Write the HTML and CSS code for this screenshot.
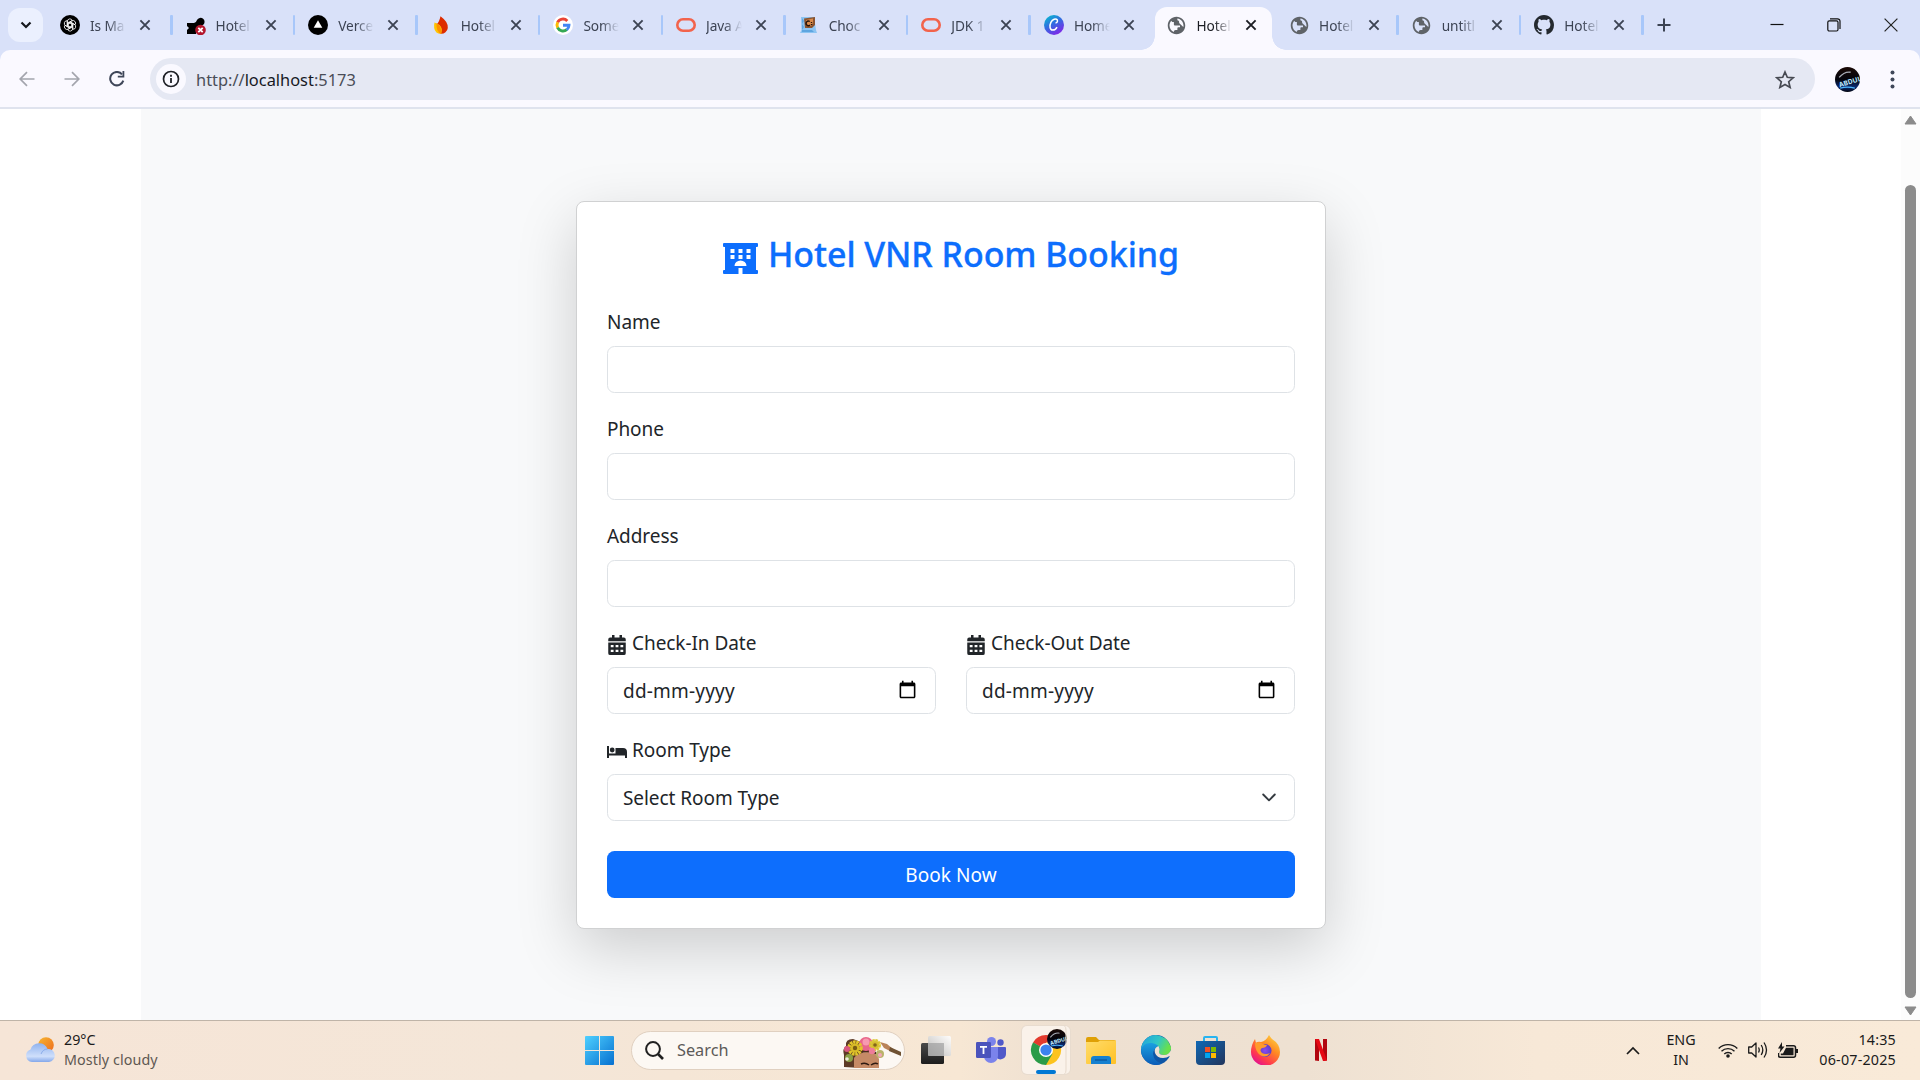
FILE: index.html
```html
<!DOCTYPE html>
<html lang="en">
<head>
<meta charset="utf-8">
<title>Hotel VNR Room Booking</title>
<link rel="stylesheet" href="styles.css">
</head>
<body>
<svg class="defs" aria-hidden="true">
  <defs>
    <linearGradient id="gCanva" x1="0" y1="0" x2=".6" y2="1"><stop offset="0" stop-color="#00c9cc"/><stop offset=".5" stop-color="#2f6fe0"/><stop offset="1" stop-color="#7d2ae8"/></linearGradient>
    <linearGradient id="gWin" x1="0" y1="0" x2="1" y2="1"><stop offset="0" stop-color="#4fd0ff"/><stop offset="1" stop-color="#0670d0"/></linearGradient>
    <linearGradient id="gFolder" x1="0" y1="0" x2="1" y2="1"><stop offset="0" stop-color="#ffdc6b"/><stop offset="1" stop-color="#ffc125"/></linearGradient>
    <linearGradient id="gEdge" x1="0" y1="0" x2="1" y2=".4"><stop offset="0" stop-color="#1e9fe0"/><stop offset=".6" stop-color="#31c7c5"/><stop offset="1" stop-color="#68e04c"/></linearGradient>
    <linearGradient id="gEdge2" x1="0" y1="0" x2="0" y2="1"><stop offset="0" stop-color="#1ba0e0"/><stop offset="1" stop-color="#0a5cb8"/></linearGradient>
    <linearGradient id="gStore" x1="0" y1="0" x2="1" y2="1"><stop offset="0" stop-color="#1068b4"/><stop offset="1" stop-color="#22355c"/></linearGradient>
    <linearGradient id="gFox" x1="1" y1="0" x2=".3" y2="1"><stop offset="0" stop-color="#ffe54a"/><stop offset=".45" stop-color="#ff8a22"/><stop offset=".8" stop-color="#ff3750"/><stop offset="1" stop-color="#e3138f"/></linearGradient>
    <radialGradient id="gFox2"><stop offset="0" stop-color="#8a4bf0"/><stop offset="1" stop-color="#5b3dc8"/></radialGradient>
    <linearGradient id="gCloud" x1="0" y1="0" x2="0" y2="1"><stop offset="0" stop-color="#8fb2ee"/><stop offset=".7" stop-color="#cfdffb"/><stop offset="1" stop-color="#83a7ea"/></linearGradient>
    <linearGradient id="gSun" x1="0" y1="0" x2="1" y2="1"><stop offset="0" stop-color="#f6b62f"/><stop offset="1" stop-color="#ee6a1e"/></linearGradient>
    <linearGradient id="gDark" x1="0" y1="0" x2="0" y2="1"><stop offset="0" stop-color="#4a4a4a"/><stop offset="1" stop-color="#1c1c1c"/></linearGradient>
    <linearGradient id="gPale" x1="1" y1="0" x2="0" y2="1"><stop offset="0" stop-color="#ffffff"/><stop offset="1" stop-color="#b8b8b8"/></linearGradient>
    <linearGradient id="gNight" x1="0" y1="0" x2="0" y2="1"><stop offset="0" stop-color="#1a0a06"/><stop offset=".5" stop-color="#03040c"/><stop offset=".8" stop-color="#0a2a72"/><stop offset="1" stop-color="#02030a"/></linearGradient>
    <symbol id="x" viewBox="0 0 12 12"><path d="M1.4 1.4l9.2 9.2M10.6 1.4l-9.2 9.2" fill="none" stroke="currentColor" stroke-width="1.9"/></symbol>
    <symbol id="globe" viewBox="0 0 24 24"><path fill="#5f6368" d="M12 2C6.48 2 2 6.48 2 12s4.48 10 10 10 10-4.48 10-10S17.52 2 12 2zM4 12c0-.61.08-1.21.21-1.78L8.99 15v1c0 1.1.9 2 2 2v1.93C7.06 19.43 4 16.07 4 12zm13.89 5.4c-.26-.81-1-1.4-1.9-1.4h-1v-3c0-.55-.45-1-1-1h-6v-2h2c.55 0 1-.45 1-1V7h2c1.1 0 2-.9 2-2v-.41C17.920 5.770 20 8.650 20 12c0 2.080-.81 3.980-2.110 5.400z" transform="rotate(180 12 12)"/></symbol>
    <symbol id="oracle" viewBox="0 0 20 20"><rect x="1.300" y="4.300" width="17.400" height="11.400" rx="5.700" fill="none" stroke="#f2634c" stroke-width="2.600"/></symbol>
    <symbol id="avatar" viewBox="0 0 24 24"><circle cx="12" cy="12" r="12" fill="url(#gNight)"/><path d="M4 10Q9 4 15 5" stroke="#a9aeb8" stroke-width="1.300" fill="none"/><text x="3" y="17" class="avatar-text" transform="rotate(-17 12 13)">ABDUL</text><path d="M5 20.300Q12 18.500 19 20.300" stroke="#4db8ff" stroke-width="1.200" fill="none"/></symbol>
    <symbol id="cal" viewBox="0 0 448 512"><path fill="currentColor" fill-rule="evenodd" d="M96 0h64v64h128V0h64v64h48a48 48 0 0 1 48 48v48H0v-48a48 48 0 0 1 48-48h48zM0 192h448v272a48 48 0 0 1-48 48H48a48 48 0 0 1-48-48zM64 256v56h72v-56zM188 256v56h72v-56zM312 256v56h72v-56zM64 376v56h72v-56zM188 376v56h72v-56zM312 376v56h72v-56z"/></symbol>
    <symbol id="datepick" viewBox="0 0 24 24"><path d="M20 3h-1V1h-2v2H7V1H5v2H4c-1.100 0-2 .9-2 2v16c0 1.100.9 2 2 2h16c1.100 0 2-.9 2-2V5c0-1.100-.9-2-2-2zm0 18H4V8h16v13z"/></symbol>
  </defs>
</svg>

<div class="tabstrip">
  <div class="tab-search"><svg width="12" height="8" viewBox="0 0 12 8"><path d="M1.500 1.500L6 6l4.500-4.500" fill="none" stroke="#16181d" stroke-width="2.200"/></svg></div>
  <div class="tabs">
    <div class="tab"><svg class="fav" viewBox="0 0 20 20"><circle cx="10" cy="10" r="10"/><g fill="none" stroke="#fff" stroke-width=".8"><path id="petal" d="M7.300 11.500V6.500a2.600 2.600 0 0 1 5-1l-4 2.400v4.700"/><use href="#petal" transform="rotate(60 10 10)"/><use href="#petal" transform="rotate(120 10 10)"/><use href="#petal" transform="rotate(180 10 10)"/><use href="#petal" transform="rotate(240 10 10)"/><use href="#petal" transform="rotate(300 10 10)"/></g></svg><span class="tab-title">Is Ma</span><svg class="close"><use href="#x"/></svg></div>
    <div class="tab"><svg class="fav" viewBox="0 0 20 20"><path d="M1 8h7q2 0 3-3a4 4 0 1 1 6 5q-7 1-7 5v4H1v-4l2-2-2-2z"/><circle cx="14.500" cy="15" r="5.300" fill="#b3162d"/><path d="M12.300 12.800l4.400 4.400m0-4.400l-4.400 4.400" stroke="#fff" stroke-width="1.800"/></svg><span class="tab-title">Hotel</span><svg class="close"><use href="#x"/></svg></div>
    <div class="tab"><svg class="fav" viewBox="0 0 20 20"><circle cx="10" cy="10" r="10"/><path d="M10 5.200l4.300 7.600H5.700z" fill="#fff"/></svg><span class="tab-title">Verce</span><svg class="close"><use href="#x"/></svg></div>
    <div class="tab"><svg class="fav" viewBox="0 0 20 20"><path d="M9.500 1.200Q17.500 7 16.800 13a6.500 6.500 0 0 1-7 5.800Q5 17 5 10q2-1.500 3-4 .8-2 1.500-4.800z" fill="#dd2c00"/><path d="M3.500 7.500Q3 9 3.200 13a6.300 6.300 0 0 0 7 5.800Q12 13 8.500 10 7 8.500 3.500 7.500z" fill="#ffc400"/><path d="M5.500 8.200Q11 11 10.200 18.800 5 17 5.500 8.200z" fill="#ff9100"/></svg><span class="tab-title">Hotel</span><svg class="close"><use href="#x"/></svg></div>
    <div class="tab"><svg class="fav" viewBox="0 0 20 20"><circle cx="10" cy="10" r="10" fill="#fff"/><g fill="none" stroke-width="2.900"><path d="M14.300 5.900A6 6 0 0 0 4.600 7.400" stroke="#ea4335"/><path d="M4.700 7.200a6 6 0 0 0 0 5.600" stroke="#fbbc05"/><path d="M4.600 12.600a6 6 0 0 0 9.200 2.100" stroke="#34a853"/><path d="M13.700 14.800A6 6 0 0 0 16 10.200h-6" stroke="#4285f4"/></g></svg><span class="tab-title">Some</span><svg class="close"><use href="#x"/></svg></div>
    <div class="tab"><svg class="fav"><use href="#oracle"/></svg><span class="tab-title">Java A</span><svg class="close"><use href="#x"/></svg></div>
    <div class="tab"><svg class="fav" viewBox="0 0 20 20"><path d="M2 2h13l2 13 1 3H1l1.500-3z" fill="#8cc4f2"/><path d="M3 3l2 3-2 3 2 3-2 3h10l2 2H3z" fill="#5ea5e0"/><path d="M5 3.500L16 2v8l-3 3H6z" fill="#8b5430"/><path d="M7 5l7-1.500V8l-2 3H8z" fill="#d98a4b"/><path d="M10.800 6.500A2.300 2.300 0 1 0 11 10m1.500-3v1m0 1v1" stroke="#25150c" stroke-width="1.400" fill="none"/></svg><span class="tab-title">Choc</span><svg class="close"><use href="#x"/></svg></div>
    <div class="tab"><svg class="fav"><use href="#oracle"/></svg><span class="tab-title">JDK 1</span><svg class="close"><use href="#x"/></svg></div>
    <div class="tab no-sep"><svg class="fav" viewBox="0 0 20 20"><circle cx="10" cy="10" r="10" fill="url(#gCanva)"/><path d="M11.500 7.800c1.500.3 2.500-1.700 1.700-3-1.300-1.700-4.700-.8-6.300 2.500-1.800 3.600-1 7.600 1.700 7.800 2.100.1 3.700-1.500 4.400-3" fill="none" stroke="#fff" stroke-width="1.500"/></svg><span class="tab-title">Home</span><svg class="close"><use href="#x"/></svg></div>
    <div class="tab active"><svg class="fav globe"><use href="#globe"/></svg><span class="tab-title">Hotel</span><svg class="close"><use href="#x"/></svg></div>
    <div class="tab"><svg class="fav globe"><use href="#globe"/></svg><span class="tab-title">Hotel</span><svg class="close"><use href="#x"/></svg></div>
    <div class="tab"><svg class="fav globe"><use href="#globe"/></svg><span class="tab-title">untitl</span><svg class="close"><use href="#x"/></svg></div>
    <div class="tab"><svg class="fav" viewBox="0 0 16 16"><path fill="#24292f" d="M8 0C3.580 0 0 3.580 0 8c0 3.540 2.290 6.530 5.470 7.590.4.070.55-.17.55-.38 0-.19-.01-.82-.01-1.490-2.010.37-2.530-.49-2.690-.94-.09-.23-.48-.94-.82-1.130-.28-.15-.68-.52-.01-.53.63-.01 1.080.58 1.230.82.72 1.210 1.870.87 2.330.66.070-.52.28-.87.51-1.070-1.780-.2-3.640-.89-3.640-3.950 0-.87.31-1.590.82-2.150-.08-.2-.36-1.020.08-2.120 0 0 .67-.21 2.200.82.640-.18 1.320-.27 2-.27s1.360.09 2 .27c1.530-1.040 2.200-.82 2.200-.82.44 1.100.16 1.920.08 2.120.51.56.82 1.270.82 2.150 0 3.070-1.870 3.750-3.650 3.950.29.25.54.73.54 1.480 0 1.070-.01 1.930-.01 2.200 0 .21.15.46.55.38A8.010 8.010 0 0 0 16 8c0-4.420-3.580-8-8-8z"/></svg><span class="tab-title">Hotel</span><svg class="close"><use href="#x"/></svg></div>
  </div>
  <svg class="newtab" width="14" height="14" viewBox="0 0 14 14"><path d="M7 .5v13M.5 7h13" stroke="#3c4353" stroke-width="2"/></svg>
  <div class="window-buttons">
    <svg width="14" height="14" viewBox="0 0 14 14"><path d="M.5 6.500h13" stroke="#111" stroke-width="1.200"/></svg>
    <svg width="14" height="14" viewBox="0 0 14 14"><rect x=".8" y="2.800" width="10.200" height="10.200" rx="1.500" fill="none" stroke="#111" stroke-width="1.200"/><path d="M3 .8h7.500a2.500 2.500 0 0 1 2.500 2.500V11" fill="none" stroke="#111" stroke-width="1.200"/></svg>
    <svg width="14" height="14" viewBox="0 0 14 14"><path d="M.6.6l12.800 12.800M13.400.6L.6 13.400" stroke="#222" stroke-width="1.200"/></svg>
  </div>
</div>

<div class="toolbar">
  <svg class="nav-icon" viewBox="0 0 16 16"><path d="M15.500 8H1.500M8 1.200L1.200 8 8 14.800" fill="none" stroke="#a3a5ad" stroke-width="1.700"/></svg>
  <svg class="nav-icon" viewBox="0 0 16 16"><path d="M.5 8h14M8 1.200L14.800 8 8 14.800" fill="none" stroke="#a3a5ad" stroke-width="1.700"/></svg>
  <svg class="nav-icon" viewBox="0 0 16 16"><path d="M14.300 9.600A6.700 6.700 0 1 1 13 3.300" fill="none" stroke="#3f4759" stroke-width="2"/><path d="M15.300 0v6.500H8.800V4.800h4.700V0z" fill="#3f4759"/></svg>
  <div class="omnibox">
    <span class="site-info"><svg width="18" height="18" viewBox="0 0 18 18"><circle cx="9" cy="9" r="7.500" fill="none" stroke="#1f2127" stroke-width="1.700"/><path d="M9 8v5M9 4.700v2" stroke="#1f2127" stroke-width="1.800"/></svg></span>
    <span class="url">http://<b>localhost</b>:5173</span>
    <svg class="star" viewBox="0 0 20 19"><path d="M10 2l2.300 5.300 5.900.5-4.500 3.900 1.400 5.700-5.100-3-5.100 3 1.400-5.700-4.500-3.900 5.900-.5z" fill="none" stroke="#474a52" stroke-width="1.700"/></svg>
  </div>
  <svg class="profile"><use href="#avatar"/></svg>
  <svg class="menu" width="5" height="19" viewBox="0 0 5 19"><g fill="#3f4759"><circle cx="2.500" cy="2.500" r="2"/><circle cx="2.500" cy="9.500" r="2"/><circle cx="2.500" cy="16.500" r="2"/></g></svg>
</div>

<div class="viewport">
  <main class="page">
    <form class="card">
      <h2><svg width="35" height="31" viewBox="0 0 35 31"><path fill="#0d6efd" fill-rule="evenodd" d="M1 0h33q1 0 1 1v2q0 1-1 1h-1v23h1q1 0 1 1v2q0 1-1 1H19.500v-6h-4v6H1q-1 0-1-1v-2q0-1 1-1h1V4H1Q0 4 0 3V1q0-1 1-1zM7.500 6v4h4V6zM15.500 6v4h4V6zM23.500 6v4h4V6zM7.500 12v4h4v-4zM15.500 12v4h4v-4zM23.500 12v4h4v-4zM11.500 23h12a6 5.500 0 0 0-12 0z"/></svg><span>Hotel VNR Room Booking</span></h2>
      <div class="field"><label>Name</label><div class="input"></div></div>
      <div class="field"><label>Phone</label><div class="input"></div></div>
      <div class="field"><label>Address</label><div class="input"></div></div>
      <div class="row">
        <div class="field"><label><svg class="cal"><use href="#cal"/></svg>Check-In Date</label><div class="input date"><span>dd-mm-yyyy</span><svg class="picker"><use href="#datepick"/></svg></div></div>
        <div class="field"><label><svg class="cal"><use href="#cal"/></svg>Check-Out Date</label><div class="input date"><span>dd-mm-yyyy</span><svg class="picker"><use href="#datepick"/></svg></div></div>
      </div>
      <div class="field"><label><svg class="bed" viewBox="0 0 20 12"><path d="M0 0h2v7.500h6.500V2H16q4 0 4 4v6h-2V9.500H2V12H0z"/><circle cx="5.200" cy="4" r="2.400"/></svg>Room Type</label><div class="input select"><span>Select Room Type</span><svg width="14" height="9" viewBox="0 0 14 9"><path d="M1.200 1.500L7 7.300l5.800-5.800" fill="none" stroke="#343a40" stroke-width="1.900" stroke-linecap="round" stroke-linejoin="round"/></svg></div></div>
      <button class="submit" type="button">Book Now</button>
    </form>
  </main>
  <div class="scrollbar">
    <svg width="13" height="10" viewBox="0 0 13 10"><path d="M6.500 1L12 9H1z" fill="#8b8b8b" stroke="#8b8b8b" stroke-linejoin="round"/></svg>
    <div class="thumb"></div>
    <svg width="13" height="10" viewBox="0 0 13 10"><path d="M6.500 9L12 1H1z" fill="#8b8b8b" stroke="#8b8b8b" stroke-linejoin="round"/></svg>
  </div>
</div>

<footer class="taskbar">
  <div class="weather">
    <svg width="30" height="26" viewBox="0 0 30 26"><circle cx="21" cy="8" r="7.800" fill="url(#gSun)"/><path d="M7 25a6.500 6.500 0 0 1-1.500-12.600A9 9 0 0 1 22.500 12 6.500 6.500 0 1 1 24 25z" fill="url(#gCloud)"/><path d="M16 17q2-5 6.500-5" stroke="#7ea2e6" fill="none" stroke-width=".8"/></svg>
    <div class="weather-text"><span>29°C</span><span class="dim">Mostly cloudy</span></div>
  </div>
  <div class="apps">
    <svg class="start" width="29" height="29" viewBox="0 0 29 29"><path d="M1 0h13v14H0V1q0-1 1-1zM15 0h13q1 0 1 1v13H15zM0 15h14v14H1q-1 0-1-1zM15 15h14v13q0 1-1 1H15z" fill="url(#gWin)"/></svg>
    <div class="search">
      <svg width="19" height="19" viewBox="0 0 19 19"><circle cx="8" cy="8" r="6.900" fill="none" stroke="#202020" stroke-width="2"/><path d="M13 13l5 5" stroke="#202020" stroke-width="2.600"/></svg>
      <span>Search</span>
      <svg class="frida" width="60" height="31" viewBox="0 0 60 31"><path d="M2 30V18Q0 12 4 9 3 2 11 2l8 3v26z" fill="#5d3a26"/><path d="M12 31V21q3-6 13-6 10 0 12 7v9z" fill="#c58a66"/><path d="M12 20q12-9 25-1-6-9-14-9-9 0-11 10z" fill="#4a2c1d"/><path d="M19 27q4-2 8 1m2 0q4-3 7-1" stroke="#2e1a12" fill="none" stroke-width="1.500"/><path d="M38 5l7 2 6 5-3 2-6-3z" fill="#b98258"/><path d="M48 10l11 5v4l-12-5z" fill="#6f5233"/><circle cx="7" cy="21" r="4" fill="#8aa146"/><circle cx="38" cy="17" r="4" fill="#b9b36a"/><circle cx="24" cy="7" r="7" fill="#e8668a"/><circle cx="24" cy="5" r="3.500" fill="#f79ab0"/><circle cx="13" cy="11" r="6" fill="none" stroke="#e2c62a" stroke-width="3.500" stroke-dasharray="2.600 .6"/><circle cx="13" cy="11" r="4.500" fill="#d9bb27"/><circle cx="13" cy="11" r="2.200" fill="#7a5c14"/><circle cx="33" cy="8" r="4.500" fill="#d2bd30" stroke="#dcc736" stroke-width="3" stroke-dasharray="2.400 .6"/><circle cx="33" cy="8" r="1.800" fill="#85651a"/><circle cx="5" cy="12" r="3" fill="#d9567e"/><circle cx="30" cy="14" r="3.200" fill="#ee7c99"/><circle cx="38" cy="18" r="2" fill="#f2a6b8"/><circle cx="5" cy="22" r="1.800" fill="#f0eadc"/></svg>
    </div>
    <svg class="taskview" width="30" height="28" viewBox="0 0 30 28"><rect y="7" width="23" height="21" rx="1.500" fill="url(#gDark)"/><rect x="7" width="23" height="20" rx="1.500" fill="url(#gPale)" opacity=".92"/><path d="M7 7h16v13H7z" fill="#9c9c9c" opacity=".6"/></svg>
    <svg class="teams" width="30" height="26" viewBox="0 0 30 26"><circle cx="15.500" cy="4.500" r="4.500" fill="#7b83eb"/><circle cx="24.500" cy="5.500" r="3.200" fill="#5059c9"/><path d="M20 10h9q1 0 1 1v6a5.500 5.500 0 0 1-10 3z" fill="#5059c9"/><path d="M8 10h14v9a7 7 0 0 1-14 0z" fill="#7b83eb"/><rect y="5" width="15" height="16" rx="1.200" fill="#4b53bc"/><path d="M4 9h7v1.800H8.400V17H6.600v-6.200H4z" fill="#fff"/></svg>
    <div class="chrome"><svg width="48" height="48" viewBox="0 0 48 48"><path d="M24 24L11 16.500A15 15 0 0 1 37 16.500H24z" fill="#e33b2e"/><path d="M24 24L11 16.500A15 15 0 0 0 24 39l6.500-11.300z" fill="#2a9b48"/><path d="M24 24L24 39A15 15 0 0 0 37 16.500H24z" fill="#fcc31e"/><path d="M24 24L11 16.500 17.500 27.800 24 24 30.500 27.800 24 39z" fill="#2a9b48"/><circle cx="24" cy="24" r="7" fill="#fff"/><circle cx="24" cy="24" r="5.600" fill="#3b82ee"/><use href="#avatar" x="25" y="3" width="20" height="20"/><rect x="14" y="44" width="20" height="4" rx="2" fill="#0078d4"/><path d="M42.500 0q1.500 1 1.500 4v40q0 3-1.500 4" fill="none" stroke="#e6d9cc"/></svg></div>
    <svg class="folder" width="30" height="27" viewBox="0 0 30 27"><path d="M0 2q0-2 2-2h8l3 3h15q2 0 2 2v4H0z" fill="#dfa006"/><path d="M0 5h12l2-1.500h16V26q0 1-1 1H1q-1 0-1-1z" fill="url(#gFolder)"/><path d="M5 27v-5q0-3 3-3h14q3 0 3 3v5z" fill="#1580d0"/><path d="M9 23h12" stroke="#0b559c" stroke-width="1.300"/></svg>
    <svg class="edge" width="30" height="30" viewBox="0 0 30 30"><circle cx="15" cy="15" r="15" fill="#0e56a6"/><path d="M0 15A15 15 0 0 1 15 0q11 1 15 12 .5 8-7 8-6 0-5-4 2-5-4-6Q5 8 0 15z" fill="url(#gEdge)"/><path d="M0 15Q2 7 11 8q6 1 7 5-6 0-6 6 1 8 9 9.700A15 15 0 0 1 0 15z" fill="url(#gEdge2)"/><path d="M17.500 11q-5 2-3.500 7 2 5 8 5 4 0 6.500-2l1.500 1v-7q-2 5-7 5-5 0-5-3 1.500-3-.5-6z" fill="#efe1d2"/></svg>
    <svg class="store" width="29" height="29" viewBox="0 0 29 29"><path d="M8 7V2q0-1 1-1h11q1 0 1 1v5" fill="none" stroke="#28b4f0" stroke-width="2"/><path d="M0 5h29v20q0 4-4 4H4q-4 0-4-4z" fill="url(#gStore)"/><path d="M9 11h5v5H9z" fill="#f25022"/><path d="M15 11h5v5h-5z" fill="#7fba00"/><path d="M9 17h5v5H9z" fill="#00a4ef"/><path d="M15 17h5v5h-5z" fill="#ffb900"/></svg>
    <svg class="firefox" width="29" height="30" viewBox="0 0 29 30"><path d="M18 0q2 3 3 4 8 5 8 13A14.300 13.500 0 0 1 0 17Q0 10 4 4l1 4q2-2 5-1 5-1 8-7z" fill="url(#gFox)"/><circle cx="14" cy="15.500" r="6.500" fill="url(#gFox2)"/><path d="M4 8q5-2 8 1 2 1 4 1-1 3-5 3-3 2 0 5 4 2 8 0-4 6-10 2-5-4-5-12z" fill="#ff9a2c"/></svg>
    <svg class="netflix" width="12" height="22" viewBox="0 0 12 22"><path d="M0 0h4v22l-4-.5zM8 0h4v21.500L8 22z" fill="#b1060f"/><path d="M0 0h4l8 21.500-4 .5z" fill="#e50914"/></svg>
  </div>
  <div class="tray">
    <svg class="up" width="14" height="9" viewBox="0 0 14 9"><path d="M1 8l6-6 6 6" fill="none" stroke="#1b1b1b" stroke-width="1.700"/></svg>
    <div class="lang"><span>ENG</span><span>IN</span></div>
    <svg class="wifi" width="20" height="16" viewBox="0 0 20 16"><g fill="none" stroke="#1b1b1b" stroke-width="1.400"><path d="M.7 6.500a13 13 0 0 1 18.600 0M3.500 9.300a9.200 9.200 0 0 1 13 0M6.300 12a5.200 5.200 0 0 1 7.400 0"/></g><circle cx="10" cy="14" r="1.800" fill="#1b1b1b"/></svg>
    <svg class="volume" width="20" height="18" viewBox="0 0 20 18"><g fill="none" stroke="#1b1b1b" stroke-width="1.300"><path d="M.7 6h3L8 2v14l-4.300-4h-3z" stroke-linejoin="round"/><path d="M10.500 6.500q1.500 2.500 0 5M13.200 4q3.200 5 0 10M16 1.500q5 7.500 0 15"/></g></svg>
    <svg class="battery" width="20" height="17" viewBox="0 0 20 17"><path d="M8 3.700h7.500q2 0 2 2v7.600q0 2-2 2h-13q-2 0-2-2V11" fill="none" stroke="#1b1b1b" stroke-width="1.500"/><path d="M8 5.800h7.500v7.400H2.800V11.500H5zM18 7h2v4h-2zM4 0L0 6.500h2.500L1.500 11l5-6.500H4z" fill="#1b1b1b"/></svg>
    <div class="clock"><span>14:35</span><span>06-07-2025</span></div>
  </div>
</footer>
</body>
</html>
```
FILE: styles.css
```css
* { box-sizing: border-box; }
body {
  margin: 0;
  width: 1920px;
  height: 1080px;
  overflow: hidden;
  display: flex;
  flex-direction: column;
  font-family: "Noto Sans", "Open Sans", sans-serif;
  color: #212529;
  background: #fff;
}
svg { display: block; flex: none; }
.defs { position: absolute; width: 0; height: 0; }
.avatar-text { font: bold 6.5px "Noto Sans", sans-serif; fill: #bfeaff; }

/* tab strip */
.tabstrip { flex: none; height: 50px; display: flex; align-items: center; background: #d9e1f9; z-index: 1; }
.tab-search { width: 35px; height: 34px; margin: 0 6px 0 8px; border-radius: 12px; background: #ebf0fe; display: flex; align-items: center; justify-content: center; }
.tabs { display: flex; height: 50px; }
.tab { position: relative; width: 122.62px; display: flex; align-items: center; padding-left: 14px; color: #3c4353; }
.tab:first-child { padding-left: 11px; }
.tab::after { content: ""; position: absolute; right: -1px; top: 14.5px; width: 2.5px; height: 20px; border-radius: 1px; background: #a8c7fa; }
.tab.no-sep::after { display: none; }
.fav { width: 20px; height: 20px; }
.fav.globe { width: 21px; height: 21px; margin: 0 -.5px; }
.tab-title { width: 36px; margin: 1px 0 0 10px; white-space: nowrap; font-size: 13.7px; line-height: 22px; letter-spacing: -.1px; -webkit-mask-image: linear-gradient(90deg, #000 50%, transparent); mask-image: linear-gradient(90deg, #000 50%, transparent); }
.close { width: 12px; height: 12px; margin-left: 13px; }
.tab.active { color: #1b1d23; z-index: 1; }
.tab.active > * { z-index: 1; }
.tab.active::before { content: ""; position: absolute; left: 3px; right: 3px; top: 7px; bottom: 0; border-radius: 12px 12px 0 0; background: #faf9ff; }
.tab.active::after { left: -11px; right: -11px; top: 36px; width: auto; height: 14px; border-radius: 0; background: radial-gradient(circle at 0 0, transparent 13.5px, #faf9ff 14px) left / 14px 14px no-repeat, radial-gradient(circle at 100% 0, transparent 13.5px, #faf9ff 14px) right / 14px 14px no-repeat; z-index: 0; }
.newtab { margin-left: 14px; }
.window-buttons { margin: 0 22px 0 auto; display: flex; gap: 43px; }

/* address bar */
.toolbar { flex: none; height: 59px; display: flex; align-items: center; padding: 1px 0 0 19px; background: #faf9ff; border-bottom: 2px solid #dfe3ee; box-shadow: 0 -14px 0 0 #d9e1f9; border-radius: 10px 10px 0 0; }
.nav-icon { width: 16px; height: 16px; margin-right: 29px; }
.omnibox { width: 1665px; height: 42px; border-radius: 21px; background: #e5e8f3; display: flex; align-items: center; padding: 0 20px 0 6px; margin-left: -4px; }
.site-info { width: 30px; height: 30px; border-radius: 50%; background: #faf9ff; display: flex; align-items: center; justify-content: center; }
.url { margin: 1px 0 0 10px; font-size: 16.4px; line-height: 24px; color: #4a4d57; }
.url b { font-weight: 400; color: #17191f; }
.star { width: 20px; height: 19px; margin-left: auto; }
.profile { width: 25px; height: 25px; margin-left: 20px; }
.menu { margin-left: 30px; }

/* page area */
.viewport { flex: 1; min-height: 0; display: flex; padding-left: 141px; }
.page { width: 1620px; background: #f8f9fa; display: flex; justify-content: center; align-items: flex-start; padding-top: 92px; overflow: hidden; }
.card { width: 750px; height: 728px; padding: 30px; border: 1px solid #d0d1d2; border-radius: 8px; background: #fff; box-shadow: 0 20px 60px rgba(0, 0, 0, .175); display: flex; flex-direction: column; }
h2 { margin: 0 0 30px; height: 44px; display: flex; align-items: center; justify-content: center; gap: 10px; font-size: 34px; font-weight: 500; line-height: 42px; letter-spacing: -.08px; color: #0d6efd; -webkit-text-stroke: .3px #0d6efd; white-space: nowrap; }
h2 svg { margin-top: 8px; }
h2 span { margin-top: -1px; }
.field { flex: 1; margin-bottom: 20px; }
.card > .field { flex: none; }
.row { display: flex; gap: 30px; }
label { display: flex; align-items: center; height: 30px; padding-top: 2px; margin-bottom: 10px; font-size: 19px; line-height: 28px; letter-spacing: -.06px; white-space: nowrap; }
.cal { width: 18px; height: 20px; margin: 3px 6px 0 1px; }
.bed { width: 20px; height: 12px; margin: 3px 5px 0 0; fill: #212529; }
.input { height: 47px; border: 1px solid #dee2e6; border-radius: 7.5px; background: #fff; display: flex; align-items: center; justify-content: space-between; padding: 0 18px 0 15px; font-size: 19px; letter-spacing: -.06px; }
.date { letter-spacing: .2px; }
.picker { width: 19px; height: 19px; margin-top: -2px; }
.select svg { margin-top: -1px; }
.submit { height: 47px; margin-top: 10px; border: 0; border-radius: 7.5px; background: #0d6efd; color: #fff; font: 19px "Noto Sans", sans-serif; letter-spacing: .05px; }
.scrollbar { margin-left: auto; width: 19px; background: #fcfcfc; display: flex; flex-direction: column; align-items: center; padding: 6px 0 4px 0; }
.thumb { width: 11px; height: 813px; margin: 60px 0 auto; border-radius: 6px; background: #8b8b8b; }

/* taskbar */
.taskbar { flex: none; height: 60px; border-top: 1px solid #bfb4a8; display: flex; background: linear-gradient(90deg, #f6e5d7 0, #f4e6d8 28%, #f5e6d6 35%, #f7e7d4 50%, #eee0d1 55%, #eee1d2 68%, #f7e8d7 80%, #f9ead8 100%); font-size: 14.3px; line-height: 20px; color: #1b1b1b; position: relative; z-index: 2; }
.weather { width: 585px; padding: 0 0 1px 25px; display: flex; align-items: center; gap: 9px; }
.weather-text, .lang, .clock { display: flex; flex-direction: column; }
.dim { color: #5e5852; letter-spacing: .1px; }
.apps { display: flex; align-items: center; padding-bottom: 1px; }
.search { width: 274px; height: 39px; margin-left: 17px; border: 1px solid #e0d0c0; border-radius: 20px; background: #fcf8f3; display: flex; align-items: center; padding-left: 13px; font-size: 16.3px; color: #5c5a58; }
.search span { margin-left: 13px; }
.frida { margin: 5px 2px 0 auto; }
.taskview { margin-left: 16px; }
.teams { margin-left: 25px; }
.chrome { width: 48px; height: 48px; margin-left: 16px; border-radius: 5px; background: #faf2ea; box-shadow: 0 0 0 1px #e8dccf; }
.folder { margin-left: 16px; }
.edge { margin-left: 25px; }
.store { margin-left: 25px; }
.firefox { margin-left: 26px; }
.netflix { margin-left: 35px; }
.tray { margin-left: auto; padding: 0 24px 1px 0; display: flex; align-items: center; }
.lang { width: 60px; margin-left: 11px; align-items: center; }
.wifi { margin-left: 7px; }
.volume { margin-left: 10px; }
.battery { margin-left: 10px; }
.clock { width: 98px; align-items: flex-end; letter-spacing: .2px; }
```
